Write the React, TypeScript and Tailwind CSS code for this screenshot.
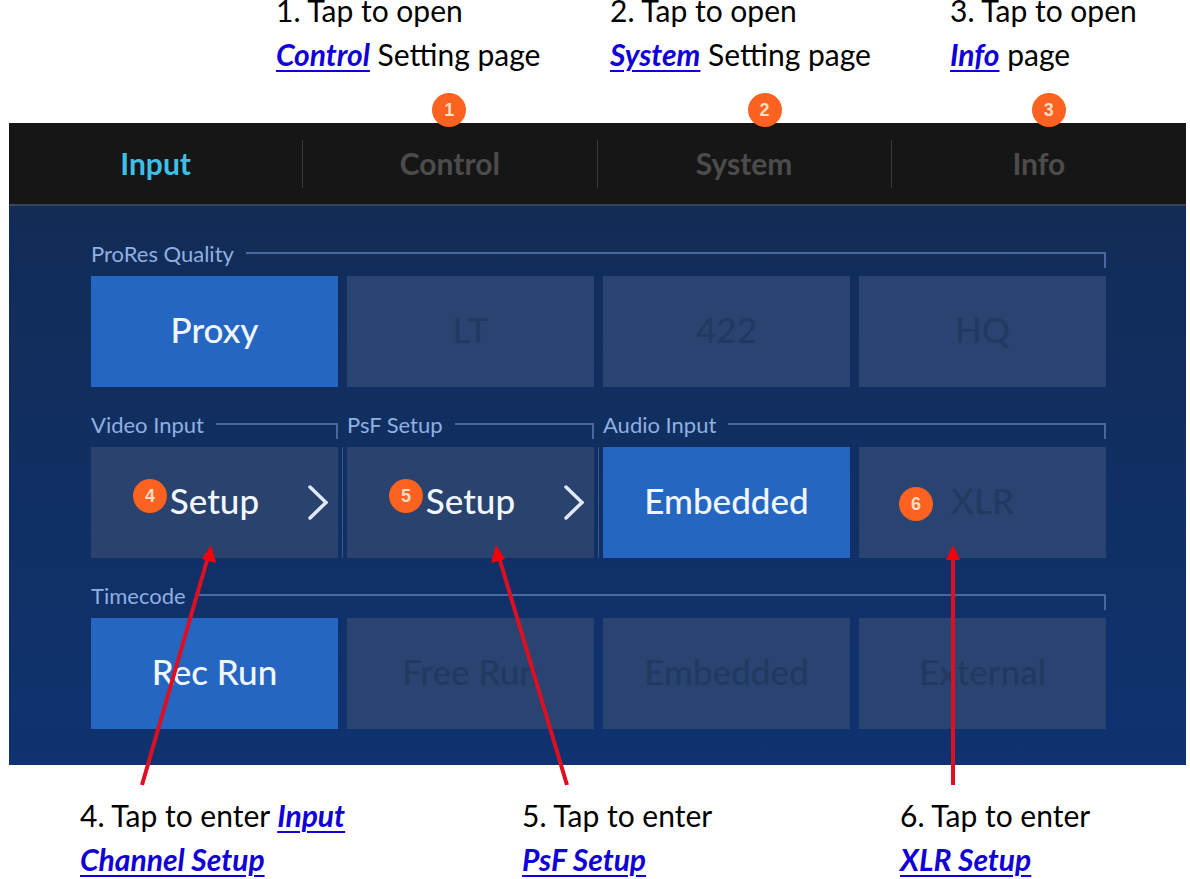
import type { ReactNode } from "react";

type Option = {
  label: string;
  active?: boolean;
  setup?: boolean;
  badge?: number;
};

const tabs = [
  { label: "Input", active: true },
  { label: "Control", badge: 1, badgePosition: "left-1/2 -ml-[18px]" },
  { label: "System", badge: 2, badgePosition: "left-1/2 ml-[3px]" },
  { label: "Info", badge: 3, badgePosition: "left-1/2 -ml-[7px]" },
];

function Badge({ value, className }: { value: number; className: string }) {
  return (
    <span
      className={`absolute z-10 flex size-[34px] items-center justify-center rounded-full bg-[#fd6220] font-['Liberation_Sans'] text-lg font-bold text-[#ffdcc4] ${className}`}
    >
      {value}
    </span>
  );
}

function OptionButton({ label, active, setup, badge }: Option) {
  const color = active
    ? "bg-[#2566c2] text-[#f0f6ff]"
    : setup
      ? "bg-[#29426e] text-[#f0f6ff]"
      : "bg-[#294470] text-[#203a62]";

  return (
    <button
      type="button"
      className={`relative flex h-[111px] items-center justify-center pb-1 text-[35px] font-medium ${color}`}
    >
      {badge && (
        <Badge
          value={badge}
          className={setup ? "left-[42px] top-8" : "left-10 top-10"}
        />
      )}
      {label}
      {setup && (
        <>
          <svg
            className="absolute right-2.5 top-[37px] h-9 w-5"
            viewBox="0 0 20 36"
            fill="none"
            stroke="#dfe8fc"
            strokeWidth="3.500"
            strokeLinecap="round"
          >
            <path d="M2 3 L18 18.500 L2 34" />
          </svg>
          {/* Divider between neighbouring groups */}
          <span className="absolute -right-[5px] top-0 h-full w-px bg-[#3a578c]" />
        </>
      )}
    </button>
  );
}

function Group({
  title,
  className = "",
  children,
}: {
  title: string;
  className?: string;
  children: ReactNode;
}) {
  return (
    <section className={className}>
      {/* Title with bracket line */}
      <div className="flex h-9 items-start gap-3">
        <h2 className="text-[22px] leading-7 text-[#8fb0e0]">{title}</h2>
        <div className="mt-3 h-4 flex-1 border-r-2 border-t-2 border-[#4a68a0]" />
      </div>
      {children}
    </section>
  );
}

function Note({ children }: { children: ReactNode }) {
  return <p className="whitespace-nowrap">{children}</p>;
}

function NoteLink({ children }: { children: ReactNode }) {
  return (
    <a
      href="#"
      className="font-bold italic text-[#1000d8] underline decoration-2 underline-offset-4"
    >
      {children}
    </a>
  );
}

export default function App() {
  return (
    <main className="overflow-hidden bg-white font-['Lato','Noto_Sans',sans-serif] text-black">
      {/* Notes above the screen */}
      <div className="-mt-3 grid h-[135px] grid-cols-[334fr_340fr_240fr] pl-[276px] text-[30px] leading-[44px]">
        <Note>
          1. Tap to open
          <br />
          <NoteLink>Control</NoteLink> Setting page
        </Note>
        <Note>
          2. Tap to open
          <br />
          <NoteLink>System</NoteLink> Setting page
        </Note>
        <Note>
          3. Tap to open
          <br />
          <NoteLink>Info</NoteLink> page
        </Note>
      </div>

      {/* Device screen */}
      <div className="relative ml-[9px] mr-1 bg-linear-to-b from-[#122b52] to-[#0f3270]">
        <nav className="grid h-[83px] grid-cols-4 border-b-2 border-[#34465e] bg-[#161616]">
          {tabs.map((tab, i) => (
            <div key={tab.label} className="relative flex items-center">
              {tab.badge && (
                <Badge
                  value={tab.badge}
                  className={`-top-[30px] ${tab.badgePosition}`}
                />
              )}
              <button
                type="button"
                className={`flex-1 text-[30px] font-bold ${tab.active ? "text-[#3fbfe6]" : "text-[#4c4c4c]"}`}
              >
                {tab.label}
              </button>
              {i < tabs.length - 1 && <div className="h-12 w-px bg-[#3a3a3a]" />}
            </div>
          ))}
        </nav>

        <div className="space-y-6 pb-9 pl-[82px] pr-20 pt-[34px]">
          <Group title="ProRes Quality">
            <div className="grid grid-cols-4 gap-[9px]">
              <OptionButton label="Proxy" active />
              <OptionButton label="LT" />
              <OptionButton label="422" />
              <OptionButton label="HQ" />
            </div>
          </Group>

          <div className="grid grid-cols-4 gap-[9px]">
            <Group title="Video Input">
              <div className="grid">
                <OptionButton label="Setup" setup badge={4} />
              </div>
            </Group>
            <Group title="PsF Setup">
              <div className="grid">
                <OptionButton label="Setup" setup badge={5} />
              </div>
            </Group>
            <Group title="Audio Input" className="col-span-2">
              <div className="grid grid-cols-2 gap-[9px]">
                <OptionButton label="Embedded" active />
                <OptionButton label="XLR" badge={6} />
              </div>
            </Group>
          </div>

          <Group title="Timecode">
            <div className="grid grid-cols-4 gap-[9px]">
              <OptionButton label="Rec Run" active />
              <OptionButton label="Free Run" />
              <OptionButton label="Embedded" />
              <OptionButton label="External" />
            </div>
          </Group>
        </div>

        {/* Arrows from the notes below to the buttons */}
        <svg
          className="pointer-events-none absolute inset-0 h-full w-full overflow-visible"
          viewBox="0 0 1177 642"
          preserveAspectRatio="none"
          stroke="#dc1022"
          strokeWidth="4"
          fill="#f5000c"
        >
          <path d="M133 662 L199 434" />
          <path d="M558 662 L490 434" />
          <path d="M944 662 V434" />
          <g stroke="none">
            <path d="M202 422 L207 440 L193 436 Z" />
            <path d="M487 422 L496 436 L482 440 Z" />
            <path d="M944 422 L951 437 H937 Z" />
          </g>
        </svg>
      </div>

      {/* Notes below the screen */}
      <div className="grid grid-cols-[442fr_378fr_290fr] pl-20 pt-7 text-[30px] leading-[44px]">
        <Note>
          4. Tap to enter <NoteLink>Input</NoteLink>
          <br />
          <NoteLink>Channel Setup</NoteLink>
        </Note>
        <Note>
          5. Tap to enter
          <br />
          <NoteLink>PsF Setup</NoteLink>
        </Note>
        <Note>
          6. Tap to enter
          <br />
          <NoteLink>XLR Setup</NoteLink>
        </Note>
      </div>
    </main>
  );
}
